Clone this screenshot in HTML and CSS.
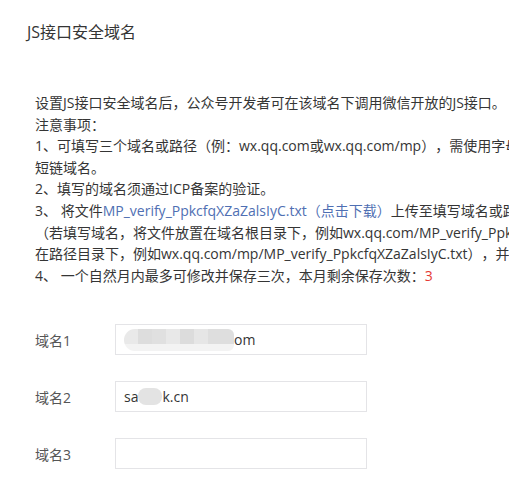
FILE: index.html
```html
<!DOCTYPE html>
<html lang="zh-CN">
<head>
<meta charset="utf-8">
<title>JS接口安全域名</title>
<link rel="stylesheet" href="styles.css">
</head>
<body>
<div class="page">
  <h2 class="title">JS接口安全域名</h2>
  <div class="desc">
    <p>设置JS接口安全域名后，公众号开发者可在该域名下调用微信开放的JS接口。</p>
    <p>注意事项：</p>
    <p>1、可填写三个域名或路径（例：wx.qq.com或wx.qq.com/mp），需使用字母、数字及“-”的组合，不支持IP地址、端口号及<br>短链域名。</p>
    <p>2、填写的域名须通过ICP备案的验证。</p>
    <p>3、 将文件<a class="link" href="#">MP_verify_PpkcfqXZaZalsIyC.txt（点击下载）</a>上传至填写域名或路径指定的目录下<br>（若填写域名，将文件放置在域名根目录下，例如wx.qq.com/MP_verify_PpkcfqXZaZalsIyC.txt；若填写路径，将文件放置<br>在路径目录下，例如wx.qq.com/mp/MP_verify_PpkcfqXZaZalsIyC.txt），并确保可以访问。</p>
    <p>4、 一个自然月内最多可修改并保存三次，本月剩余保存次数：<span class="count">3</span></p>
  </div>
  <form class="form">
    <div class="row">
      <label class="label">域名1</label>
      <div class="input"><span class="blur blur-long"></span><span>om</span></div>
    </div>
    <div class="row">
      <label class="label">域名2</label>
      <div class="input"><span>sa</span><span class="blur blur-short"></span><span>k.cn</span></div>
    </div>
    <div class="row">
      <label class="label">域名3</label>
      <div class="input"></div>
    </div>
  </form>
</div>
</body>
</html>
```
FILE: styles.css
```css
* { box-sizing: border-box; }
body {
  margin: 0;
  background: #fff;
  color: #353535;
  font-family: "Open Sans", "Noto Sans CJK SC", "Microsoft YaHei", sans-serif;
  text-spacing-trim: space-all;
  overflow: hidden;
}
.page { padding-top: 20px; }
.title {
  margin: 0;
  padding-left: 27px;
  font-size: 16px;
  font-weight: normal;
  line-height: 24px;
  color: #353535;
}
.desc {
  margin-top: 48px;
  padding-left: 35px;
  font-size: 14px;
  line-height: 21.6px;
  white-space: nowrap;
  color: #353535;
}
.desc p { margin: 0; }
.link { color: #4f6fb3; text-decoration: none; }
.count { color: #e53935; }
.form { margin-top: 38px; }
.row {
  display: flex;
  align-items: center;
  padding-left: 35px;
  margin-bottom: 26px;
}
.label {
  width: 80px;
  font-size: 14px;
  color: #555;
}
.input {
  width: 252px;
  height: 31px;
  border: 1px solid #e4e4e7;
  padding: 0 8px;
  display: flex;
  align-items: center;
  font-size: 14px;
  color: #353535;
}
.blur { display: inline-block; }
.blur-long {
  width: 110px;
  height: 22px;
  border-radius: 11px 6px 6px 11px;
  background:
    linear-gradient(to bottom, transparent 15px, #f3f3f3 15px),
    linear-gradient(to right, #e9e9e9 0 14px, #dddddd 14px 28px, #e0e0e0 28px 42px, #e8e8e8 42px 56px, #dcdcdc 56px 70px, #e6e6e6 70px 84px, #dedede 84px 110px);
}
.blur-short {
  width: 24px;
  height: 17px;
  border-radius: 8px;
  background: #e3e3e3;
}
```
